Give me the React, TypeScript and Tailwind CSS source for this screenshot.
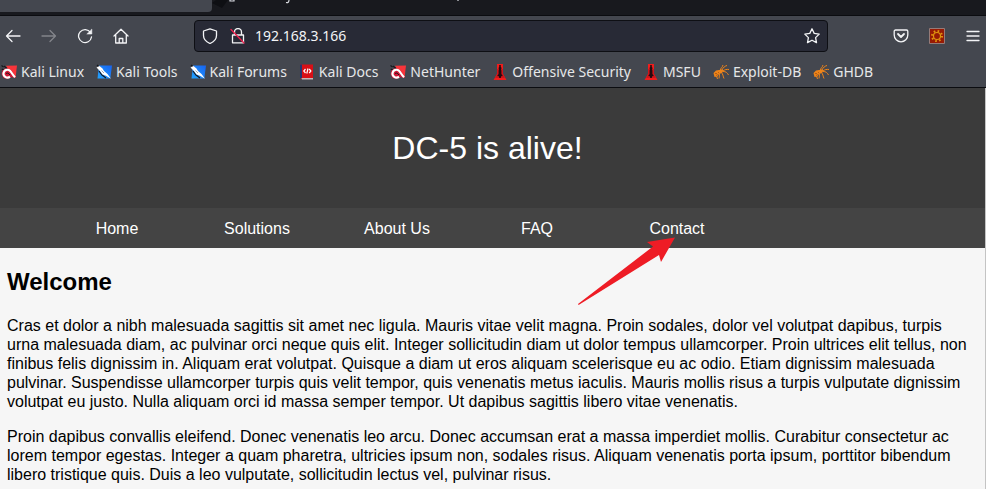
import type { ReactNode } from "react";

const UI = "font-['Noto_Sans',sans-serif]";
const PAGE = "font-['Liberation_Sans',Arial,sans-serif]";

function Stroke({ children, className = "" }: { children: ReactNode; className?: string }) {
  return (
    <svg
      viewBox="0 0 16 16"
      className={`block size-4 shrink-0 ${className}`}
      fill="none"
      stroke="currentColor"
      strokeWidth="1.3"
      strokeLinecap="round"
      strokeLinejoin="round"
      aria-hidden="true"
    >
      {children}
    </svg>
  );
}

function DragonIcon() {
  return (
    <svg viewBox="0 0 16 16" className="block size-4 shrink-0" aria-hidden="true">
      <path d="M5 1.8 16 1.5 14.500 14 9 9Z" fill="#f8343a" />
      <path d="M5 4 1.500 6 .5 10l2 4 4 1 4-2 4 1-1.500-4-3-4Z" fill="#d11736" />
      <path d="m.5 1.500 2 1.500M3 2l3 2.500M.8 5l2 1" stroke="#17181c" strokeWidth="1.200" />
      <path d="M9 12.800C5.500 15 2 12 2.500 9c.8-3.500 4.500-4 6.500-2.200 1.800 1.700 2.500 4 5 6.400" fill="none" stroke="#fff" strokeWidth="2.200" />
      <path d="M5 9.800c1-1.300 2.300-1 4 1.200" fill="none" stroke="#17181c" strokeWidth="1" />
    </svg>
  );
}

function ToolsIcon() {
  return (
    <svg viewBox="0 0 16 16" className="block size-4 shrink-0" aria-hidden="true">
      <defs>
        <linearGradient id="tools" x1="0" y1="1" x2="1" y2="0">
          <stop offset="0" stopColor="#22a4ff" />
          <stop offset="1" stopColor="#1762f0" />
        </linearGradient>
      </defs>
      <path d="M3 1.500H16L14.300 14.500H1.500Z" fill="url(#tools)" />
      <path d="m1 1 4 3.500M3 7l3 4 4 3" fill="none" stroke="#17181c" strokeWidth="1.200" />
      <path d="m.5 3.500 3-1.500 3 2.500 1.500 2.500 3.500 3 3.500 4.800-5-3-3.500-1.300-2.500-3.500Z" fill="#fff" />
      <path d="m5.500 6.500 2.500 2.500" stroke="#8b92a0" strokeWidth=".8" />
    </svg>
  );
}

function DocsIcon() {
  return (
    <svg viewBox="0 0 16 16" className="block size-4 shrink-0" aria-hidden="true">
      <path d="M1 .5h13V15H2.500L1 13.500Z" fill="#d90f16" />
      <path d="M1 .5h2V14H1Z" fill="#27366e" />
      <path d="M2.500 14H14v1.400H3Z" fill="#c7b5b7" />
      <path d="M6.500 5 4.800 7l1.700 2M10.200 5l1.700 2-1.700 2M9 4.500 7.800 9.500" fill="none" stroke="#fff" strokeWidth="1.200" />
    </svg>
  );
}

function OffsecIcon() {
  return (
    <svg viewBox="-1 0 16 16" className="block size-4 shrink-0" aria-hidden="true">
      <path d="M4 0h6v10l3.500 6H.5L4 10Z" fill="#f01d1c" />
      <path d="M4 5h6v5l2 4H2l2-4Z" fill="#d0141a" />
      <path d="M6.200 1h1.600v2l.8 1-.6 1.500.4 1V10l1.400 2-1.700.2-.3 1.800H6.200l-.3-1.800-1.700-.2L5.600 10V6.500l.4-1L5.500 4l.7-1Z" fill="#230c10" />
    </svg>
  );
}

function AntIcon() {
  return (
    <svg viewBox="0 0 16 16" className="block size-4 shrink-0" fill="none" stroke="#ef8419" aria-hidden="true">
      <path d="M.5 9 3 6.500 6 6l3-.5 1.500 1L9 9l-3 1-1.500 2.500-3 .5-.5-2Z" fill="#ef8419" stroke="none" />
      <path d="M7.500 6C7.500 4 9.500 3.500 10 1M9 6C10 3.500 12 2 14 1.500M10 7c2-1.500 3.500-1.800 6-1.500M10 7.500c3 0 4 1 5.500 3.500M8.500 8.500c1.500 1.500 1.500 4 2.500 6M6.500 10 6 14.500M3.500 12l1 3" strokeWidth="1" />
      <path d="M2 9.500h2M5 8l1 1M3 11.500l2-1" stroke="#9b4f13" strokeWidth=".7" />
    </svg>
  );
}

const bookmarks = [
  { label: "Kali Linux", icon: <DragonIcon /> },
  { label: "Kali Tools", icon: <ToolsIcon /> },
  { label: "Kali Forums", icon: <ToolsIcon /> },
  { label: "Kali Docs", icon: <DocsIcon /> },
  { label: "NetHunter", icon: <DragonIcon /> },
  { label: "Offensive Security", icon: <OffsecIcon /> },
  { label: "MSFU", icon: <OffsecIcon /> },
  { label: "Exploit-DB", icon: <AntIcon /> },
  { label: "GHDB", icon: <AntIcon /> },
];

function TabStrip() {
  return (
    <div className="flex h-4 items-start border-b border-[#0b0c10] bg-[#18191e]">
      <div className="h-3 w-[212px] shrink-0 rounded-br bg-[#44474f]" />
      <svg viewBox="0 0 260 15" className="h-[15px] w-[260px] shrink-0" fill="none" aria-hidden="true">
        <path d="M0 3 10 8 16 0H4Z" fill="#0e0f13" />
        <path d="M18 0v1h4V0M74 2.500c2 .5 3-.5 3-2.500M246 0v1" stroke="#d8dae0" strokeWidth="1.200" />
      </svg>
    </div>
  );
}

function Toolbar() {
  return (
    <div className="flex h-10 items-center bg-[#44474f] px-[5px] text-[#f3f4f6]">
      <div className="flex shrink-0 gap-5">
        <button type="button" aria-label="Back">
          <Stroke><path d="M15 8H1.500M7 2.500 1.500 8 7 13.500" /></Stroke>
        </button>
        <button type="button" aria-label="Forward" className="text-[#83858b]" disabled>
          <Stroke><path d="M1 8h13.500M9 2.500 14.500 8 9 13.500" /></Stroke>
        </button>
        <button type="button" aria-label="Reload">
          <Stroke>
            <path d="M13.500 4.500A6.500 6.500 0 1 0 14.500 9" />
            <path d="M14.800 1.500v4.500h-4.600Z" fill="currentColor" strokeWidth=".6" />
          </Stroke>
        </button>
        <button type="button" aria-label="Home">
          <Stroke>
            <path d="M1 8 8 1.200 15 8M2.700 7v8h10.600V7M6.200 15v-4.500h3.600V15" />
          </Stroke>
        </button>
      </div>
      <form className="mr-[65px] ml-[65px] flex h-8 min-w-0 flex-1 items-center rounded border border-[#0e0f14] bg-[#282a36] px-[7px]" onSubmit={(e) => e.preventDefault()}>
        <Stroke><path d="M8 .8 14.500 3v4.500c0 3.500-3 6.500-6.500 8-3.500-1.500-6.500-4.500-6.500-8V3Z" /></Stroke>
        <span className="ml-3 block">
          <Stroke>
            <path d="M4.500 7V4a3.500 3.500 0 0 1 7 0v3M2.500 7h11v7.800h-11Z" />
            <path d="M1 1.500 14 15" stroke="#f0204e" />
          </Stroke>
        </span>
        <input aria-label="Address" defaultValue="192.168.3.166" className={`ml-[9px] h-6 min-w-0 flex-1 bg-transparent text-[14px] leading-6 text-[#f3f4f6] outline-none ${UI}`} />
        <button type="button" aria-label="Bookmark this page">
          <Stroke><path d="m8 .8 2.200 4.600 5 .7-3.600 3.500.9 5L8 12.200l-4.500 2.400.9-5L.8 6.100l5-.7Z" /></Stroke>
        </button>
      </form>
      <div className="flex shrink-0 items-center gap-5">
        <button type="button" aria-label="Save to Pocket">
          <Stroke>
            <path d="M2.500 2h11c.8 0 1.300.5 1.300 1.300V7A6.800 6.800 0 0 1 1.200 7V3.300C1.200 2.500 1.700 2 2.500 2Z" />
            <path d="m5 6 3 3 3-3" strokeWidth="1.800" />
          </Stroke>
        </button>
        <button type="button" aria-label="Extension">
          <svg viewBox="0 0 16 16" className="block size-4" aria-hidden="true">
            <path d="M.5.5h15v15H.5Z" fill="#971b04" stroke="#957b78" />
            <circle cx="8" cy="8" r="3.500" fill="none" stroke="#e0940f" strokeWidth="1.200" />
            <circle cx="8" cy="8" r="5" fill="none" stroke="#e0940f" strokeWidth="2" strokeDasharray="1.600 2.327" />
          </svg>
        </button>
        <button type="button" aria-label="Open menu">
          <Stroke><path d="M2 3.500h12M2 8h12M2 12.500h12" /></Stroke>
        </button>
      </div>
    </div>
  );
}

export default function App() {
  return (
    <div className="h-screen overflow-hidden bg-[#f6f6f6]">
      <TabStrip />
      <Toolbar />
      <nav aria-label="Bookmarks" className={`flex h-8 items-center gap-3 border-b border-[#0b0c10] bg-[#44474f] pl-px text-[14px] leading-5 text-[#e6e7e9] ${UI}`}>
        {bookmarks.map((b) => (
          <a key={b.label} href="#" className="flex shrink-0 items-center gap-1 whitespace-nowrap">
            {b.icon}
            {b.label}
          </a>
        ))}
      </nav>
      <div className={`min-h-full border-r border-[#c4c4c4] text-[16px] leading-[19px] text-black ${PAGE}`}>
        <header className="flex h-[120px] items-center justify-center bg-[#3b3b3b] pr-2.5">
          <h1 className="text-[32px] leading-9 text-white">DC-5 is alive!</h1>
        </header>
        <div className="relative">
          <nav aria-label="Site" className="flex h-10 items-center bg-[#444444] pl-[47px] text-white">
            {["Home", "Solutions", "About Us", "FAQ", "Contact"].map((t) => (
              <a key={t} href="#" className="w-[140px] text-center">{t}</a>
            ))}
          </nav>
          <svg viewBox="0 0 98 68" className="pointer-events-none absolute top-[29px] left-[577px] h-[68px] w-[98px]" aria-hidden="true">
            <path d="M98 .5 70 5l6 4.500L1 67l.6 1L82 18l2 7Z" fill="#ee1c25" />
          </svg>
        </div>
        <main className="px-[7px] pt-5">
          <h2 className="mb-5 text-[24px] leading-7 font-bold">Welcome</h2>
          <p className="mb-4">
            Cras et dolor a nibh malesuada sagittis sit amet nec ligula. Mauris vitae velit magna. Proin sodales, dolor vel volutpat dapibus, turpis urna malesuada diam, ac pulvinar orci neque quis elit. Integer sollicitudin diam ut dolor tempus ullamcorper. Proin ultrices elit tellus, non finibus felis dignissim in. Aliquam erat volutpat. Quisque a diam ut eros aliquam scelerisque eu ac odio. Etiam dignissim malesuada pulvinar. Suspendisse ullamcorper turpis quis velit tempor, quis venenatis metus iaculis. Mauris mollis risus a turpis vulputate dignissim volutpat eu justo. Nulla aliquam orci id massa semper tempor. Ut dapibus sagittis libero vitae venenatis.
          </p>
          <p>
            Proin dapibus convallis eleifend. Donec venenatis leo arcu. Donec accumsan erat a massa imperdiet mollis. Curabitur consectetur ac lorem tempor egestas. Integer a quam pharetra, ultricies ipsum non, sodales risus. Aliquam venenatis porta ipsum, porttitor bibendum libero tristique quis. Duis a leo vulputate, sollicitudin lectus vel, pulvinar risus.
          </p>
        </main>
      </div>
    </div>
  );
}
